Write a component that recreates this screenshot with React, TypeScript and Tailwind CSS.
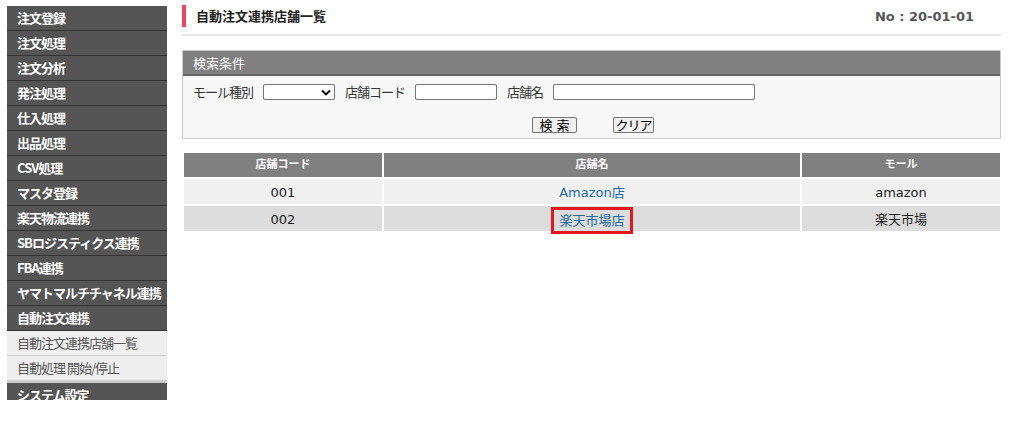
import React from "react";

const menu = [
  "注文登録",
  "注文処理",
  "注文分析",
  "発注処理",
  "仕入処理",
  "出品処理",
  "CSV処理",
  "マスタ登録",
  "楽天物流連携",
  "SBロジスティクス連携",
  "FBA連携",
  "ヤマトマルチチャネル連携",
  "自動注文連携",
];

const subMenu = ["自動注文連携店舗一覧", "自動処理 開始/停止"];

const shops = [
  { code: "001", name: "Amazon店", mall: "amazon" },
  { code: "002", name: "楽天市場店", mall: "楽天市場", marked: true },
];

const font = "font-['Meiryo','Noto_Sans_CJK_JP',sans-serif]";
const verdana = "font-['DejaVu_Sans','Noto_Sans_CJK_JP',sans-serif]";

function Sidebar() {
  return (
    <div className={`w-[160px] shrink-0 h-[394px] overflow-hidden ${font}`}>
      {menu.map((m) => (
        <div
          key={m}
          className="h-[25px] bg-[#555555] border-b border-[#333333] text-white font-bold text-[13px] tracking-[-1px] leading-[24px] pl-[10px] whitespace-nowrap"
        >
          {m}
        </div>
      ))}
      {subMenu.map((m) => (
        <div
          key={m}
          className="h-[25px] bg-[#eeeeee] border-b border-[#cccccc] text-[#555555] text-[13px] tracking-[-1px] leading-[24px] pl-[10px] whitespace-nowrap"
        >
          {m}
        </div>
      ))}
      <div className="h-[2px] bg-[#cccccc]" />
      <div className="h-[25px] bg-[#555555] text-white font-bold text-[13px] tracking-[-1px] leading-[24px] pl-[10px] whitespace-nowrap">
        システム設定
      </div>
    </div>
  );
}

export default function App() {
  return (
    <div className="w-[1009px] h-[436px] bg-white flex pt-[6px] pl-[7px] gap-[15px]">
      <Sidebar />

      <div className={`w-[819px] ${font}`}>
        {/* title */}
        <div className="flex items-center justify-between h-[30px] border-b-2 border-[#e6e6e6]">
          <div className="flex items-center h-[22px] mb-[8px] border-l-4 border-[#e8475f] pl-[10px] text-[13px] font-bold text-[#222222]">
            自動注文連携店舗一覧
          </div>
          <div className={`mb-[6px] mr-[27px] text-[13px] font-bold text-[#555555] ${verdana}`}>
            No : 20-01-01
          </div>
        </div>

        {/* search */}
        <div className="mt-[14px] border border-[#cccccc] bg-[#f7f7f7]">
          <div className="h-[25px] bg-[#808080] border-b-2 border-[#666666] text-white text-[13px] leading-[24px] pl-[10px]">
            検索条件
          </div>
          <div className="flex items-center h-[32px] pl-[10px] text-[13px] tracking-[-1px] text-[#333333]">
            <span>モール種別</span>
            <div className="ml-[10px] w-[72px] h-[16px] border border-[#767676] rounded-[2px] bg-white flex items-center justify-end pr-[3px]">
              <svg width="10" height="7" viewBox="0 0 10 7">
                <path d="M1 1.5 L5 5.5 L9 1.5" fill="none" stroke="#000" strokeWidth="1.8" />
              </svg>
            </div>
            <span className="ml-[10px]">店舗コード</span>
            <div className="ml-[10px] w-[82px] h-[16px] border border-[#767676] rounded-[2px] bg-white" />
            <span className="ml-[10px]">店舗名</span>
            <div className="ml-[10px] w-[202px] h-[16px] border border-[#767676] rounded-[2px] bg-white" />
          </div>
          <div className="flex justify-center items-start gap-[36px] pt-[9px] h-[30px] pl-[3px] text-[13px] text-black">
            <button className="h-[16px] w-[45px] leading-[14px] border border-[#767676] rounded-[2px] bg-[#efefef] tracking-[4px] pl-[4px]">
              検索
            </button>
            <button className="h-[16px] w-[41px] leading-[14px] border border-[#767676] rounded-[2px] bg-[#efefef] tracking-[-1px]">
              クリア
            </button>
          </div>
        </div>

        {/* list */}
        <table className={`mt-[12px] w-[820px] border-separate border-spacing-[2px] text-[13px] ${verdana}`}>
          <thead>
            <tr className="bg-[#808080] text-white text-[11px] font-bold h-[24px]">
              <th className="w-[198px] font-bold">店舗コード</th>
              <th className="font-bold">店舗名</th>
              <th className="w-[198px] font-bold">モール</th>
            </tr>
          </thead>
          <tbody>
            {shops.map((s, i) => (
              <tr key={s.code} className={`h-[25px] text-center ${i % 2 === 0 ? "bg-[#f0f0f0]" : "bg-[#dcdcdc]"}`}>
                <td className="text-[#222222] pt-[2px]">{s.code}</td>
                <td className="text-[#1b6aa5] pt-[2px]">
                  <span className={s.marked ? "inline-block border-[3px] border-[#e4161e] px-[5px] leading-[21px] -mt-[1px] -mb-[6px]" : ""}>
                    {s.name}
                  </span>
                </td>
                <td className="text-[#222222] pt-[2px]">{s.mall}</td>
              </tr>
            ))}
          </tbody>
        </table>
      </div>
    </div>
  );
}
